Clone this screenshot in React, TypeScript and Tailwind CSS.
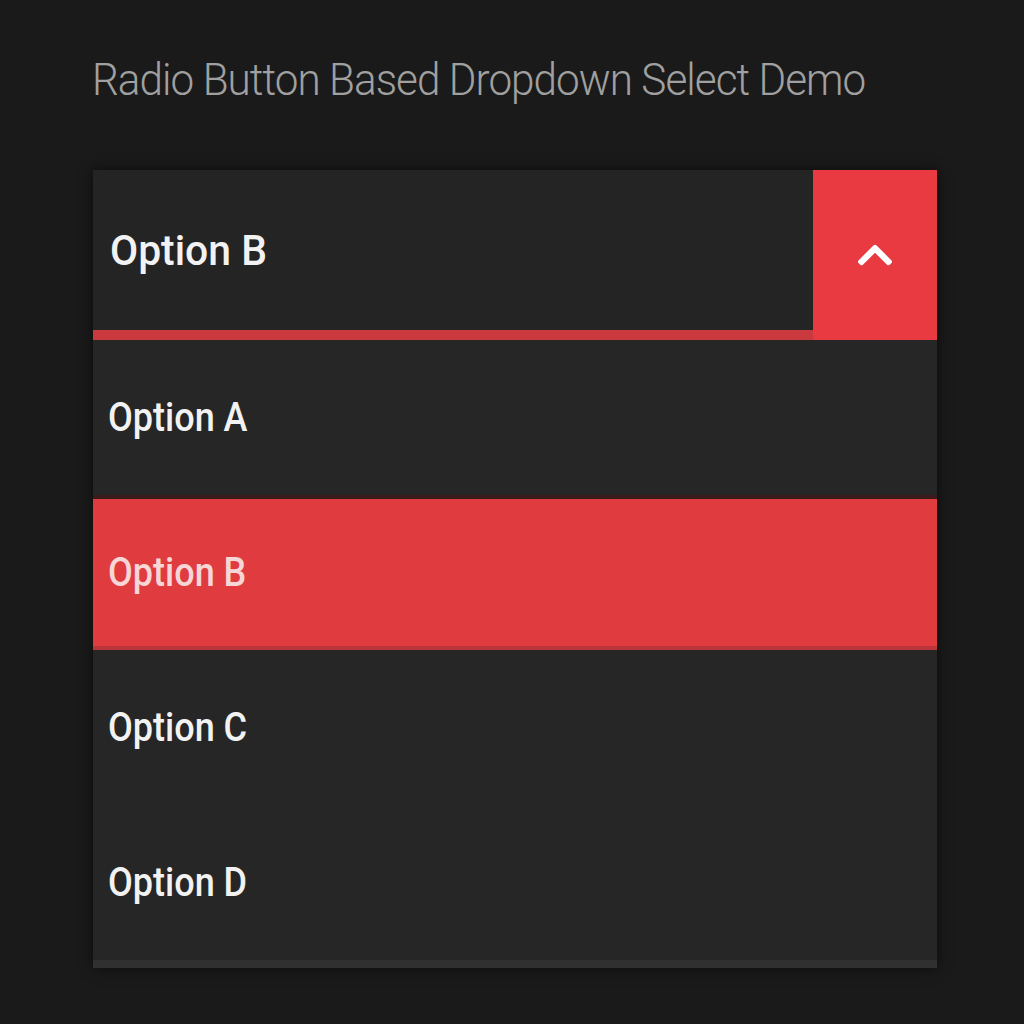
import { FaChevronUp } from "react-icons/fa";

const options = ["Option A", "Option B", "Option C", "Option D"];

export default function App() {
  const selected = "Option B";
  return (
    <div
      className="w-[1024px] h-[1024px] bg-[#1a1a1a] overflow-hidden"
      style={{ fontFamily: "Roboto, 'Liberation Sans', sans-serif" }}
    >
      <div className="pl-[92px] pt-[52px]">
        <h1 className="text-[44px] leading-[56px] font-light text-[#a0a0a0] tracking-[-1px] origin-left scale-x-[0.96] whitespace-nowrap">
          Radio Button Based Dropdown Select Demo
        </h1>
      </div>

      <div className="ml-[93px] mt-[62px] w-[844px] bg-[#262626] shadow-[0_0_12px_rgba(0,0,0,0.6)]">
        <div className="flex h-[170px] border-b-[10px] border-[#c9393d]">
          <div className="flex-1 flex items-center pl-[17px] bg-[#242424]">
            <span className="text-[43px] font-medium text-[#f2f2f2] origin-left scale-x-[0.95] whitespace-nowrap">
              {selected}
            </span>
          </div>
          <div className="w-[124px] bg-[#e83a40] flex items-center justify-center -mb-[10px]">
            <FaChevronUp className="text-white" size={40} />
          </div>
        </div>

        <div className="flex flex-col">
          {options.map((opt) => (
            <div
              key={opt}
              className={
                opt === selected
                  ? "h-[155px] flex items-center pl-[15px] bg-[#e03c40] border-y-[4px] border-t-[#3a1a1a] border-b-[#b8363a]"
                  : "h-[155px] flex items-center pl-[15px] bg-[#262626]"
              }
            >
              <span
                className={
                  opt === selected
                    ? "text-[40px] font-medium text-[#f6d6d6] origin-left scale-x-[0.9] whitespace-nowrap"
                    : "text-[40px] font-medium text-[#f2f2f2] origin-left scale-x-[0.9] whitespace-nowrap"
                }
              >
                {opt}
              </span>
            </div>
          ))}
          <div className="h-[8px] bg-[#303030]" />
        </div>
      </div>
    </div>
  );
}
